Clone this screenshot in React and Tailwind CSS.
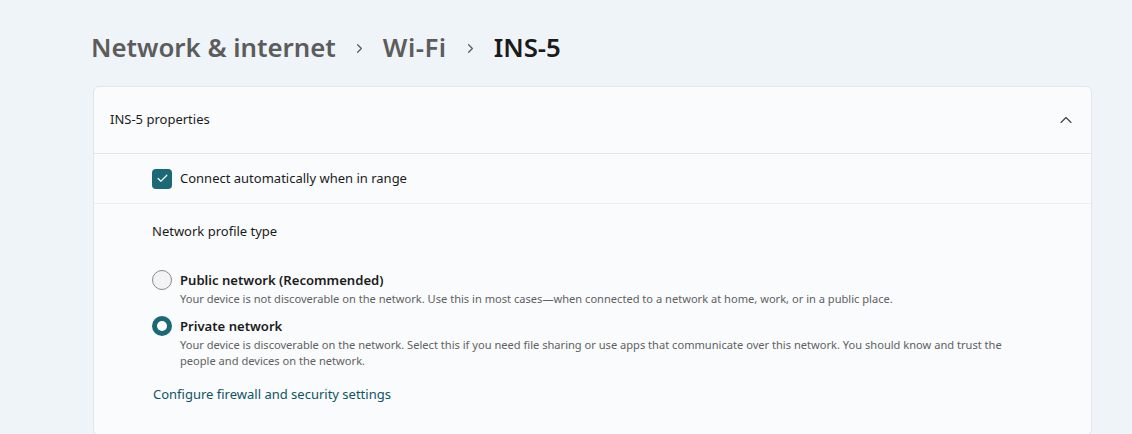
import { Check, ChevronRight, ChevronUp } from 'lucide-react';

const font = { fontFamily: '"Noto Sans", "Open Sans", sans-serif' };

function Radio({ checked }) {
  return checked ? (
    <div className="w-5 h-5 rounded-full bg-[#1b6876] flex items-center justify-center shrink-0">
      <div className="w-[10px] h-[10px] rounded-full bg-white" />
    </div>
  ) : (
    <div className="w-5 h-5 rounded-full border border-[#8a8a8a] bg-[#f3f3f3] shrink-0" />
  );
}

function Option({ checked, title, children }) {
  return (
    <div className="flex gap-2">
      <div className="pt-[1px]"><Radio checked={checked} /></div>
      <div>
        <div className="text-[13.1px] leading-[22px] font-semibold text-[#1b1b1b]">{title}</div>
        <div className="text-[11.1px] leading-[16px] text-[#616161] max-w-[840px]">{children}</div>
      </div>
    </div>
  );
}

export default function App() {
  return (
    <div className="min-h-screen bg-[#eff4f8] pl-[91px] pr-[40px] pt-[27px]" style={font}>
      <div className="flex items-center text-[25.8px] leading-[40px] font-semibold">
        <span className="text-[#5c5c5c]">Network &amp; internet</span>
        <ChevronRight size={15} strokeWidth={2} className="text-[#5c5c5c] mx-[16px] mt-[3px]" />
        <span className="text-[#5c5c5c] tracking-[0.5px]">Wi-Fi</span>
        <ChevronRight size={15} strokeWidth={2} className="text-[#5c5c5c] mx-[16px] mt-[3px]" />
        <span className="text-[#1b1b1b]">INS-5</span>
      </div>

      <div className="mt-[19px] ml-[2px] bg-[#fafbfd] border border-[#e3e5e8] rounded-[6px]">
        <div className="h-[67px] flex items-center justify-between pl-[16px] pr-[15px] border-b border-[#e3e5e8]">
          <span className="text-[13px] text-[#1b1b1b]">INS-5 properties</span>
          <ChevronUp size={20} strokeWidth={1.4} className="text-[#444]" />
        </div>

        <div className="h-[50px] flex items-center gap-2 pl-[58px] border-b border-[#eceef0]">
          <div className="w-5 h-5 rounded-[4px] bg-[#1b6876] flex items-center justify-center">
            <Check size={13} strokeWidth={2.2} className="text-white" />
          </div>
          <span className="text-[13px] text-[#1b1b1b]">Connect automatically when in range</span>
        </div>

        <div className="pl-[58px] pt-[17px] pb-[30px]">
          <div className="text-[13px] leading-[20px] text-[#1b1b1b]">Network profile type</div>
          <div className="mt-[28px] flex flex-col gap-[8px]">
            <Option checked={false} title="Public network (Recommended)">
              Your device is not discoverable on the network. Use this in most cases—when connected to a network at home, work, or in a public place.
            </Option>
            <Option checked title="Private network">
              Your device is discoverable on the network. Select this if you need file sharing or use apps that communicate over this network. You should know and trust the people and devices on the network.
            </Option>
          </div>
          <div className="mt-[16px] ml-[1px] text-[13px] text-[#0e5563]">Configure firewall and security settings</div>
        </div>
      </div>
    </div>
  );
}
